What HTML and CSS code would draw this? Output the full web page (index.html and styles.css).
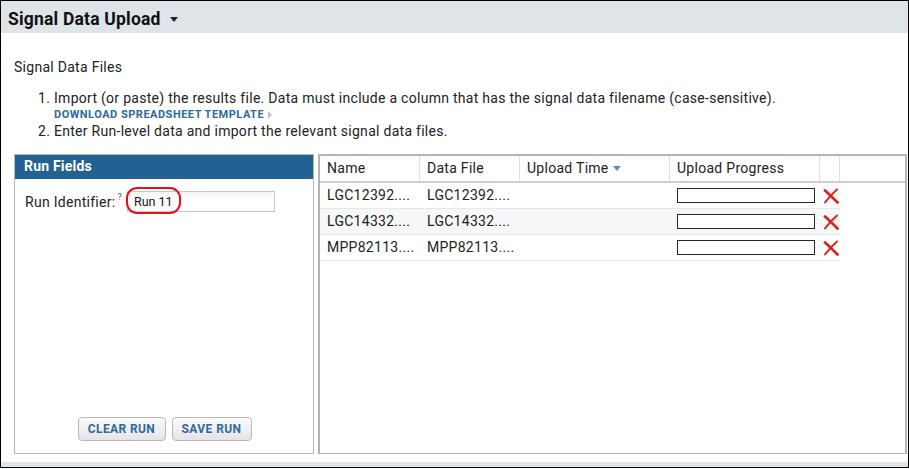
FILE: index.html
```html
<!DOCTYPE html>
<html>
<head>
<meta charset="utf-8">
<link rel="stylesheet" href="styles.css">
</head>
<body>
<div class="window">
  <div class="titlebar">
    <span class="title">Signal Data Upload</span>
    <span class="caret"></span>
  </div>
  <div class="content">
    <div class="section-title">Signal Data Files</div>
    <ol class="steps">
      <li><span class="num">1.</span><div><div>Import (or paste) the results file. Data must include a column that has the signal data filename (case-sensitive).</div><div class="dl">DOWNLOAD SPREADSHEET TEMPLATE <span class="tri"></span></div></div></li>
      <li><span class="num">2.</span><div>Enter Run-level data and import the relevant signal data files.</div></li>
    </ol>
    <div class="panels">
      <div class="left">
        <div class="left-head">Run Fields</div>
        <div class="field">
          <span class="label">Run Identifier:</span><sup class="help">?</sup>
          <span class="input-wrap">
            <span class="input">Run 11</span>
            <span class="ring"></span>
          </span>
        </div>
        <div class="buttons">
          <span class="btn btn-clear">CLEAR RUN</span>
          <span class="btn btn-save">SAVE RUN</span>
        </div>
      </div>
      <div class="right">
        <div class="thead">
          <div class="th c1">Name</div>
          <div class="th c2">Data File</div>
          <div class="th c3">Upload Time <span class="sort"></span></div>
          <div class="th c4">Upload Progress</div>
          <div class="th c5"></div>
        </div>
        <div class="tr">
          <div class="td c1">LGC12392....</div>
          <div class="td c2">LGC12392....</div>
          <div class="td c3"></div>
          <div class="td c4"><span class="bar"></span></div>
          <div class="td c5"><svg class="del" viewBox="0 0 16 16" width="16" height="16"><path d="M2 2.5 C6 6, 10 10, 14.5 14.5" stroke="#d7261c" stroke-width="2.8" fill="none" stroke-linecap="round"/><path d="M14 1.5 C10 5, 6 9, 2 14.5" stroke="#d7261c" stroke-width="2" fill="none" stroke-linecap="round"/></svg></div>
        </div>
        <div class="tr alt">
          <div class="td c1">LGC14332....</div>
          <div class="td c2">LGC14332....</div>
          <div class="td c3"></div>
          <div class="td c4"><span class="bar"></span></div>
          <div class="td c5"><svg class="del" viewBox="0 0 16 16" width="16" height="16"><path d="M2 2.5 C6 6, 10 10, 14.5 14.5" stroke="#d7261c" stroke-width="2.8" fill="none" stroke-linecap="round"/><path d="M14 1.5 C10 5, 6 9, 2 14.5" stroke="#d7261c" stroke-width="2" fill="none" stroke-linecap="round"/></svg></div>
        </div>
        <div class="tr">
          <div class="td c1">MPP82113....</div>
          <div class="td c2">MPP82113....</div>
          <div class="td c3"></div>
          <div class="td c4"><span class="bar"></span></div>
          <div class="td c5"><svg class="del" viewBox="0 0 16 16" width="16" height="16"><path d="M2 2.5 C6 6, 10 10, 14.5 14.5" stroke="#d7261c" stroke-width="2.8" fill="none" stroke-linecap="round"/><path d="M14 1.5 C10 5, 6 9, 2 14.5" stroke="#d7261c" stroke-width="2" fill="none" stroke-linecap="round"/></svg></div>
        </div>
      </div>
    </div>
  </div>
  <div class="strip"></div>
</div>
</body>
</html>
```
FILE: styles.css
```css
html, body {
  margin: 0;
  padding: 0;
  background: #fff;
}
body {
  font-family: Roboto, "Liberation Sans", sans-serif;
  color: #333;
}
.window {
  width: 909px;
  height: 468px;
  box-sizing: border-box;
  border: 1px solid #000;
  display: flex;
  flex-direction: column;
}
.titlebar {
  height: 32px;
  flex: 0 0 32px;
  background: #dfe4e8;
  display: flex;
  align-items: center;
  padding-left: 7px;
  padding-top: 4px;
  box-sizing: border-box;
}
.title {
  font-weight: bold;
  font-size: 17.5px;
  letter-spacing: 0.2px;
  color: #111;
}
.caret {
  margin-left: 9px;
  width: 0;
  height: 0;
  border-left: 4px solid transparent;
  border-right: 4px solid transparent;
  border-top: 5px solid #222;
  margin-top: 1px;
}
.content {
  flex: 1;
  padding: 25px 1px 8px 13px;
  display: flex;
  flex-direction: column;
  font-size: 14px;
  letter-spacing: 0.28px;
}
.section-title {
  line-height: 18px;
  height: 18px;
  color: #222;
}
.steps {
  list-style: none;
  margin: 14px 0 15px 0;
  padding: 0 0 0 24px;
  line-height: 16px;
  color: #222;
}
.steps li {
  display: flex;
}
.num {
  width: 16px;
  flex: 0 0 16px;
}
.dl {
  font-size: 11px;
  font-weight: bold;
  color: #2e6a9c;
  letter-spacing: 0.5px;
  line-height: 17px;
  display: flex;
  align-items: center;
}
.tri {
  display: inline-block;
  margin-left: 4px;
  width: 0;
  height: 0;
  border-top: 4px solid transparent;
  border-bottom: 4px solid transparent;
  border-left: 4px solid #c2c2c2;
}
.panels {
  display: flex;
  height: 300px;
  gap: 4px;
}
.left {
  width: 300px;
  box-sizing: border-box;
  border: 1px solid #b8b8b8;
  display: flex;
  flex-direction: column;
}
.left-head {
  background: #226192;
  color: #fff;
  font-weight: bold;
  font-size: 14px;
  letter-spacing: 0.2px;
  height: 24px;
  line-height: 23px;
  padding-left: 9px;
}
.field {
  display: flex;
  align-items: center;
  margin-top: 12px;
  padding-left: 10px;
  height: 21px;
}
.label {
  color: #222;
}
.help {
  font-size: 9px;
  color: #555;
  margin-left: 2px;
  align-self: flex-start;
  line-height: 10px;
  margin-top: 1px;
}
.input-wrap {
  position: relative;
  margin-left: 5px;
}
.input {
  display: block;
  width: 148px;
  height: 21px;
  box-sizing: border-box;
  border: 1px solid #c6c6c6;
  font-size: 12.5px;
  letter-spacing: 0;
  line-height: 19px;
  padding-left: 6px;
  color: #111;
  background: linear-gradient(#f4f4f4, #fff 40%);
}
.ring {
  position: absolute;
  left: -1px;
  top: -4px;
  width: 55px;
  height: 27px;
  box-sizing: border-box;
  border: 2px solid #e3121c;
  border-radius: 11px;
}
.buttons {
  margin-top: auto;
  margin-bottom: 12px;
  display: flex;
  justify-content: center;
  gap: 6px;
  padding-left: 1px;
}
.btn {
  display: inline-block;
  height: 24px;
  box-sizing: border-box;
  line-height: 22px;
  border: 1px solid #b9b9b9;
  border-radius: 4px;
  background: linear-gradient(#fbfbfb, #e4e4e4);
  color: #2e6a9c;
  font-weight: bold;
  font-size: 12px;
  text-align: center;
  letter-spacing: 0.4px;
}
.btn-clear { width: 88px; }
.btn-save { width: 80px; }
.right {
  flex: 1;
  box-sizing: border-box;
  border: 2px solid #b4b4b4;
  border-bottom-width: 1px;
}
.thead {
  display: flex;
  height: 27px;
  box-sizing: border-box;
  border-bottom: 2px solid #cfcfcf;
}
.th {
  height: 25px;
  line-height: 25px;
  box-sizing: border-box;
  border-right: 1px solid #e0e0e0;
  padding-left: 7px;
  color: #222;
  white-space: nowrap;
}
.c1 { width: 100px; }
.c2 { width: 100px; }
.c3 { width: 150px; }
.c4 { width: 150px; }
.c5 { width: 20px; }
.sort {
  display: inline-block;
  width: 0;
  height: 0;
  border-left: 4px solid transparent;
  border-right: 4px solid transparent;
  border-top: 5px solid #5b8cc4;
  margin-left: 1px;
  vertical-align: 2px;
}
.tr {
  display: flex;
  width: 520px;
  height: 26px;
  box-sizing: border-box;
  border-bottom: 1px solid #e8e8e8;
}
.tr.alt {
  background: #f6f7f8;
}
.td {
  height: 25px;
  line-height: 25px;
  padding-left: 7px;
  box-sizing: border-box;
  color: #222;
  white-space: nowrap;
  display: flex;
  align-items: center;
}
.bar {
  display: block;
  width: 138px;
  height: 15px;
  box-sizing: border-box;
  border: 1px solid #1b2734;
  background: #fff;
}
.c5.td {
  padding-left: 3px;
}
.del {
  display: block;
}
.strip {
  flex: 0 0 5px;
  background: #dfe4e8;
}
```
